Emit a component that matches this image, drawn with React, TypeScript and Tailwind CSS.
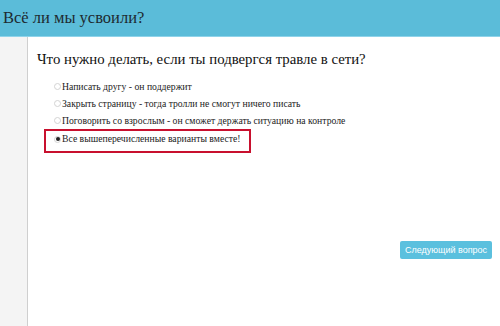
import React from 'react';

const options = [
  'Написать другу - он поддержит',
  'Закрыть страницу - тогда тролли не смогут ничего писать',
  'Поговорить со взрослым - он сможет держать ситуацию на контроле',
  'Все вышеперечисленные варианты вместе!',
];

const Radio: React.FC<{ checked: boolean }> = ({ checked }) => (
  <span className="inline-flex w-[7px] h-[7px] mr-[1px] rounded-full border border-[#d3d3d3] bg-white items-center justify-center shrink-0">
    {checked && <span className="w-[4px] h-[4px] rounded-full bg-[#222]" />}
  </span>
);

export default function App() {
  return (
    <div className="w-[500px] h-[326px] flex flex-col bg-white font-[family-name:'Liberation_Serif',serif] text-[#222] overflow-hidden">
      <header className="h-[37px] shrink-0 bg-[#5bbcd9] border-b border-[#8fd3ea] flex items-center pl-[3px]">
        <h1 className="text-[16.5px] leading-none text-[#1e2a30]">Всё ли мы усвоили?</h1>
      </header>
      <div className="flex flex-1">
        <aside className="w-[28px] shrink-0 bg-[#f4f4f4] border-r border-[#cfcfcf]" />
        <main className="flex-1 flex flex-col pl-[9px] pt-[13px] pr-[8px]">
          <p className="text-[14.8px] leading-[18px] text-[#111] whitespace-nowrap">
            Что нужно делать, если ты подвергся травле в сети?
          </p>
          <ul className="mt-[10px] flex flex-col pl-[17px]">
            {options.map((o, i) => {
              const checked = i === options.length - 1;
              return (
                <li
                  key={o}
                  className={
                    checked
                      ? 'w-[207px] h-[24px] ml-[-10px] pl-[8px] border-2 border-[#c8102e] flex items-start pt-[1px]'
                      : 'h-[17px] flex items-center'
                  }
                >
                  <label className="flex items-center h-[14px] text-[9.7px] leading-[14px] text-[#222] whitespace-nowrap">
                    <Radio checked={checked} />
                    {o}
                  </label>
                </li>
              );
            })}
          </ul>
          <div className="flex justify-end mt-[88px]">
            <button className="h-[18px] w-[92px] rounded-[2px] bg-[#5bc0de] text-white text-[9px] font-[family-name:'Liberation_Sans',sans-serif] leading-none whitespace-nowrap">
              Следующий вопрос
            </button>
          </div>
        </main>
      </div>
    </div>
  );
}
